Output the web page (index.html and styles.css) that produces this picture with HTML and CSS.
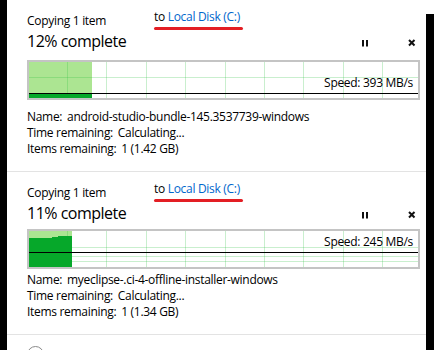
FILE: index.html
```html
<!DOCTYPE html>
<html lang="en">
  <head>
    <meta charset="UTF-8" />
    <meta name="viewport" content="width=device-width, initial-scale=1.0" />
    <title>Copying 2 items</title>
    <link rel="stylesheet" href="styles.css">
  </head>
  <body>
    <div class="dialog">
      <!-- first copy job -->
      <section class="job">
        <div class="job-head">
          <span class="job-title">Copying 1 item</span>
          <span class="job-dest">to <span class="link">Local Disk (C:)</span></span>
        </div>
        <div class="job-status">
          <span class="job-percent">12% complete</span>
          <button class="ctl" title="Pause">
            <svg width="16" height="16" viewBox="0 0 16 16"><rect x="4" y="5" width="2" height="6.5" /><rect x="8" y="5" width="2" height="6.5" /></svg>
          </button>
          <button class="ctl" title="Cancel">
            <svg width="16" height="16" viewBox="0 0 16 16"><path d="M5 5L10.5 10.5M10.5 5L5 10.5" /></svg>
          </button>
        </div>
        <div class="graph graph-a">
          <div class="graph-fill" style="width: 63px">
            <div class="graph-area" style="width: 63px; height: 5px"></div>
          </div>
          <div class="graph-speed" style="top: 31px">
            <span class="speed-label">Speed: 393 MB/s</span>
          </div>
        </div>
        <div class="job-info">
          <div><span class="info-key">Name:</span> android-studio-bundle-145.3537739-windows</div>
          <div><span class="info-key">Time remaining:</span> Calculating...</div>
          <div><span class="info-key">Items remaining:</span> 1 (1.42 GB)</div>
        </div>
      </section>

      <!-- second copy job -->
      <section class="job job-tight">
        <div class="job-head">
          <span class="job-title">Copying 1 item</span>
          <span class="job-dest">to <span class="link">Local Disk (C:)</span></span>
        </div>
        <div class="job-status">
          <span class="job-percent">11% complete</span>
          <button class="ctl" title="Pause">
            <svg width="16" height="16" viewBox="0 0 16 16"><rect x="4" y="5" width="2" height="6.5" /><rect x="8" y="5" width="2" height="6.5" /></svg>
          </button>
          <button class="ctl" title="Cancel">
            <svg width="16" height="16" viewBox="0 0 16 16"><path d="M5 5L10.5 10.5M10.5 5L5 10.5" /></svg>
          </button>
        </div>
        <div class="graph graph-b">
          <div class="graph-fill" style="width: 43px">
            <div class="graph-area" style="width: 23px; height: 29px"></div>
            <div class="graph-area" style="width: 6px; height: 30px"></div>
            <div class="graph-area" style="width: 14px; height: 31px"></div>
          </div>
          <div class="graph-speed" style="top: 21px">
            <span class="speed-label">Speed: 245 MB/s</span>
          </div>
        </div>
        <div class="job-info">
          <div><span class="info-key">Name:</span> myeclipse-.ci-4-offline-installer-windows</div>
          <div><span class="info-key">Time remaining:</span> Calculating...</div>
          <div><span class="info-key">Items remaining:</span> 1 (1.34 GB)</div>
        </div>
      </section>

      <div class="more">
        <span class="more-toggle"></span>
      </div>
    </div>
  </body>
</html>
```

FILE: styles.css
```css
* {
  margin: 0;
  padding: 0;
  box-sizing: border-box;
}

body {
  height: 350px;
  overflow: hidden;
  padding-left: 7px;
  background: linear-gradient(#fff, #fff) right top / 8px 14px no-repeat, #000;
  font-family: 'Open Sans', 'Noto Sans', sans-serif;
  font-size: 12px;
  line-height: 16px;
  letter-spacing: -0.3px;
  color: #000;
}

.dialog {
  width: 419px;
  height: 350px;
  overflow: hidden;
  background: #fff;
}

.job {
  padding: 9px 6px 14px 20px;
  border-bottom: 1px solid #e3e3e3;
}

.job-head {
  display: flex;
  align-items: flex-start;
}

.job-title {
  flex: 0 0 127px;
  margin-top: 4px;
}

.job-dest {
  display: inline-block;
}

.job-dest::after {
  content: '';
  display: block;
  width: calc(100% + 3px);
  height: 3px;
  margin-top: 2px;
  border-radius: 2px;
  background: #e31e24;
}

.link {
  color: #0066cc;
}

.job-status {
  display: flex;
  align-items: flex-start;
  gap: 30px;
}

.job-percent {
  flex: 1;
  font-size: 16px;
  line-height: 22px;
  letter-spacing: -0.5px;
}

.ctl {
  width: 16px;
  height: 16px;
  margin-top: 5px;
  border: none;
  background: none;
  display: flex;
}

.ctl svg {
  fill: #111;
  stroke: #111;
  stroke-width: 0;
}

.ctl path {
  stroke-width: 2;
}

/* throughput chart */
.graph {
  --grid: rgba(40, 190, 60, 0.25);
  position: relative;
  height: 40px;
  margin-top: 8px;
  border: 2px solid #c4c4c4;
  display: flex;
  background-color: #fff;
}

.graph,
.graph-fill {
  background-image:
    var(--rows),
    repeating-linear-gradient(to right, transparent 0 38px, var(--grid) 38px 39px, transparent 39px 39.4px);
}

.graph-a {
  --rows: linear-gradient(to bottom, transparent 15px, var(--grid) 15px 16px, transparent 16px 31px, var(--grid) 31px 32px, transparent 32px);
}

.graph-b {
  --rows: linear-gradient(to bottom, transparent 16px, var(--grid) 16px 17px, transparent 17px 25px, var(--grid) 25px 26px, transparent 26px 30px, var(--grid) 30px 31px, transparent 31px);
}

.graph-fill {
  height: 100%;
  display: flex;
  align-items: flex-end;
  background-color: #ace592;
}

.graph-area {
  flex: none;
  background: #06a82a;
}

.graph-speed {
  position: absolute;
  left: 0;
  right: 0;
  border-top: 1px solid #000;
}

.speed-label {
  position: absolute;
  right: 5px;
  bottom: 100%;
  margin-bottom: 3px;
  white-space: nowrap;
}

.job-info {
  margin-top: 9px;
}

.info-key {
  margin-right: 2px;
}

.job-tight .graph {
  margin-top: 5px;
}

.job-tight .job-info {
  margin-top: 3px;
}

.more {
  padding: 11px 20px;
}

.more-toggle {
  display: block;
  width: 17px;
  height: 17px;
  border: 1px solid #8a8a8a;
  border-radius: 50%;
}
```
